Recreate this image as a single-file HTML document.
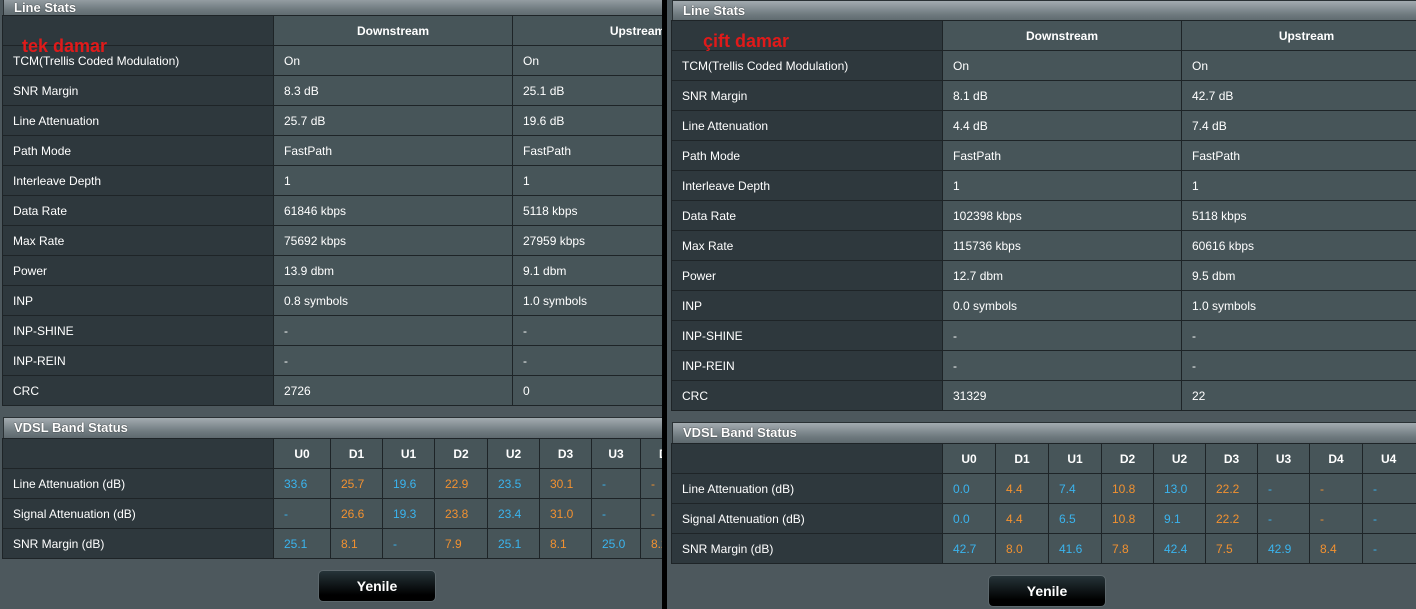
<!DOCTYPE html>
<html><head><meta charset="utf-8"><style>
*{margin:0;padding:0;box-sizing:border-box}
body{width:1416px;height:609px;background:#4d585d;position:relative;overflow:hidden;font-family:"Liberation Sans",Arial,sans-serif;font-size:12px;color:#fff}
.panel{position:absolute;top:0;overflow:hidden}
.hd{position:absolute;left:0;height:22px;background:linear-gradient(#a3abb0,#6d787d 70%,#5e696e);border:1px solid #2a3134;font-weight:bold;font-size:13px;padding-left:10px;line-height:20px;text-shadow:0 0 1px #000}
table{position:absolute;left:0;border-collapse:collapse;table-layout:fixed}
td{border:1px solid #1e2427;height:30px;padding-left:10px;background:#475559;white-space:nowrap;overflow:hidden}
td.l{background:#2e383d}
tr.h td{font-weight:bold;text-align:center;padding-left:0}
.b{color:#3ab4ee}.o{color:#f29130}
.btn{position:absolute;width:118px;height:32px;border-radius:5px;background:linear-gradient(#263439,#000 80%);border:1px solid #5d686d;font-weight:bold;font-size:14px;text-align:center;line-height:30px}
.red{position:absolute;color:#e01a1a;font-size:18px;font-weight:bold}
</style></head><body>

<div class="panel" style="left:0;width:662px;height:609px">
 <div class="hd" style="top:-5px;width:700px;left:3px;height:22px;line-height:24px">Line Stats</div>
 <table style="top:15px;left:2px;width:760px">
  <colgroup><col style="width:271px"><col style="width:239px"><col style="width:250px"></colgroup>
  <tr class="h"><td class="l"></td><td>Downstream</td><td>Upstream</td></tr>
  <tr><td class="l">TCM(Trellis Coded Modulation)</td><td>On</td><td>On</td></tr>
  <tr><td class="l">SNR Margin</td><td>8.3 dB</td><td>25.1 dB</td></tr>
  <tr><td class="l">Line Attenuation</td><td>25.7 dB</td><td>19.6 dB</td></tr>
  <tr><td class="l">Path Mode</td><td>FastPath</td><td>FastPath</td></tr>
  <tr><td class="l">Interleave Depth</td><td>1</td><td>1</td></tr>
  <tr><td class="l">Data Rate</td><td>61846 kbps</td><td>5118 kbps</td></tr>
  <tr><td class="l">Max Rate</td><td>75692 kbps</td><td>27959 kbps</td></tr>
  <tr><td class="l">Power</td><td>13.9 dbm</td><td>9.1 dbm</td></tr>
  <tr><td class="l">INP</td><td>0.8 symbols</td><td>1.0 symbols</td></tr>
  <tr><td class="l">INP-SHINE</td><td>-</td><td>-</td></tr>
  <tr><td class="l">INP-REIN</td><td>-</td><td>-</td></tr>
  <tr><td class="l">CRC</td><td>2726</td><td>0</td></tr>
 </table>
 <div class="red" style="left:22px;top:36px">tek damar</div>
 <div class="hd" style="top:417px;left:3px;width:700px">VDSL Band Status</div>
 <table style="top:438px;left:2px;width:750px">
  <colgroup><col style="width:271px"><col style="width:57px"><col style="width:52px"><col style="width:52px"><col style="width:53px"><col style="width:52px"><col style="width:52px"><col style="width:49px"><col style="width:112px"></colgroup>
  <tr class="h"><td class="l"></td><td>U0</td><td>D1</td><td>U1</td><td>D2</td><td>U2</td><td>D3</td><td>U3</td><td style="text-align:left;padding-left:18px">D4</td></tr>
  <tr><td class="l">Line Attenuation (dB)</td><td class="b">33.6</td><td class="o">25.7</td><td class="b">19.6</td><td class="o">22.9</td><td class="b">23.5</td><td class="o">30.1</td><td class="b">-</td><td class="o">-</td></tr>
  <tr><td class="l">Signal Attenuation (dB)</td><td class="b">-</td><td class="o">26.6</td><td class="b">19.3</td><td class="o">23.8</td><td class="b">23.4</td><td class="o">31.0</td><td class="b">-</td><td class="o">-</td></tr>
  <tr><td class="l">SNR Margin (dB)</td><td class="b">25.1</td><td class="o">8.1</td><td class="b">-</td><td class="o">7.9</td><td class="b">25.1</td><td class="o">8.1</td><td class="b">25.0</td><td class="o">8.2</td></tr>
 </table>
 <div class="btn" style="left:318px;top:570px">Yenile</div>
</div>

<div style="position:absolute;left:662px;top:0;width:5px;height:609px;background:#000"></div>

<div class="panel" style="left:667px;width:749px;height:609px">
 <div class="hd" style="top:0;left:5px;width:760px">Line Stats</div>
 <table style="top:20px;left:4px;width:760px">
  <colgroup><col style="width:271px"><col style="width:239px"><col style="width:250px"></colgroup>
  <tr class="h"><td class="l"></td><td>Downstream</td><td>Upstream</td></tr>
  <tr><td class="l">TCM(Trellis Coded Modulation)</td><td>On</td><td>On</td></tr>
  <tr><td class="l">SNR Margin</td><td>8.1 dB</td><td>42.7 dB</td></tr>
  <tr><td class="l">Line Attenuation</td><td>4.4 dB</td><td>7.4 dB</td></tr>
  <tr><td class="l">Path Mode</td><td>FastPath</td><td>FastPath</td></tr>
  <tr><td class="l">Interleave Depth</td><td>1</td><td>1</td></tr>
  <tr><td class="l">Data Rate</td><td>102398 kbps</td><td>5118 kbps</td></tr>
  <tr><td class="l">Max Rate</td><td>115736 kbps</td><td>60616 kbps</td></tr>
  <tr><td class="l">Power</td><td>12.7 dbm</td><td>9.5 dbm</td></tr>
  <tr><td class="l">INP</td><td>0.0 symbols</td><td>1.0 symbols</td></tr>
  <tr><td class="l">INP-SHINE</td><td>-</td><td>-</td></tr>
  <tr><td class="l">INP-REIN</td><td>-</td><td>-</td></tr>
  <tr><td class="l">CRC</td><td>31329</td><td>22</td></tr>
 </table>
 <div class="red" style="left:36px;top:31px">çift damar</div>
 <div class="hd" style="top:422px;left:5px;width:760px">VDSL Band Status</div>
 <table style="top:443px;left:4px;width:760px">
  <colgroup><col style="width:271px"><col style="width:53px"><col style="width:53px"><col style="width:53px"><col style="width:52px"><col style="width:52px"><col style="width:52px"><col style="width:52px"><col style="width:53px"><col style="width:69px"></colgroup>
  <tr class="h"><td class="l"></td><td>U0</td><td>D1</td><td>U1</td><td>D2</td><td>U2</td><td>D3</td><td>U3</td><td>D4</td><td style="text-align:left;padding-left:18px">U4</td></tr>
  <tr><td class="l">Line Attenuation (dB)</td><td class="b">0.0</td><td class="o">4.4</td><td class="b">7.4</td><td class="o">10.8</td><td class="b">13.0</td><td class="o">22.2</td><td class="b">-</td><td class="o">-</td><td class="b">-</td></tr>
  <tr><td class="l">Signal Attenuation (dB)</td><td class="b">0.0</td><td class="o">4.4</td><td class="b">6.5</td><td class="o">10.8</td><td class="b">9.1</td><td class="o">22.2</td><td class="b">-</td><td class="o">-</td><td class="b">-</td></tr>
  <tr><td class="l">SNR Margin (dB)</td><td class="b">42.7</td><td class="o">8.0</td><td class="b">41.6</td><td class="o">7.8</td><td class="b">42.4</td><td class="o">7.5</td><td class="b">42.9</td><td class="o">8.4</td><td class="b">-</td></tr>
 </table>
 <div class="btn" style="left:321px;top:575px">Yenile</div>
</div>
</body></html>
